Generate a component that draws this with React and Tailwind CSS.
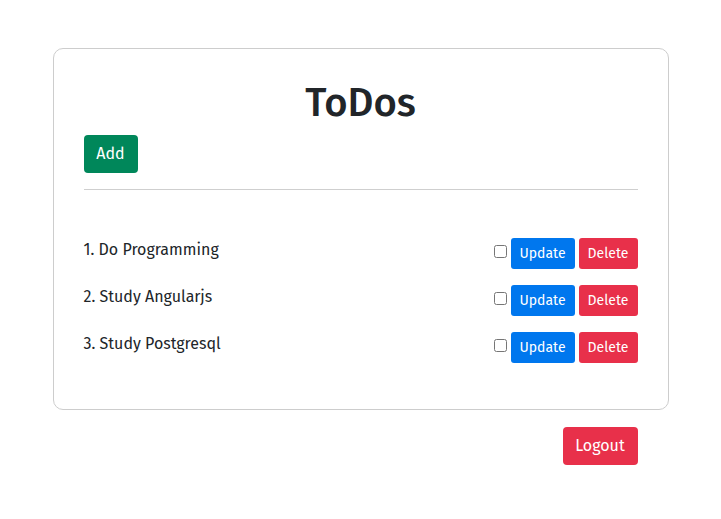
export default function App() {
  const todos = ["Do Programming", "Study Angularjs", "Study Postgresql"];
  return (
    <div className="min-h-screen bg-white text-[#212529]" style={{}}>
      <div className="w-[616px] mx-auto pt-[48px] font-['Fira_Sans','Open_Sans',sans-serif]">
        <div className="border border-[#cdcdcd] rounded-[10px] px-[30px] pt-[30px] pb-[38px]">
          <h1 className="text-[40px] font-medium leading-[48px] text-center mb-[8px]">ToDos</h1>
          <button className="h-[38px] w-[54px] bg-[#00875a] text-white text-[16px] rounded-[4px]">Add</button>
          <div className="h-px bg-[#cfcfcf] mt-[16px] mb-[40px]"></div>
          <div>
            {todos.map((t, i) => (
              <div key={i} className="h-[47px] pt-[8px] flex items-start justify-between">
                <span className="text-[16px] leading-[24px]">{i + 1}. {t}</span>
                <div className="flex items-start">
                  <input type="checkbox" className="w-[13px] h-[13px] mt-[7px] mr-[4px]" />
                  <button className="h-[31px] w-[64px] bg-[#0077ee] text-white text-[14px] rounded-[3px] mr-[4px]">Update</button>
                  <button className="h-[31px] w-[59px] bg-[#e8304a] text-white text-[14px] rounded-[3px]">Delete</button>
                </div>
              </div>
            ))}
          </div>
        </div>
        <div className="flex justify-end pr-[31px] mt-[17px]">
          <button className="h-[38px] w-[75px] bg-[#e8304a] text-white text-[16px] rounded-[4px]">Logout</button>
        </div>
      </div>
    </div>
  );
}
